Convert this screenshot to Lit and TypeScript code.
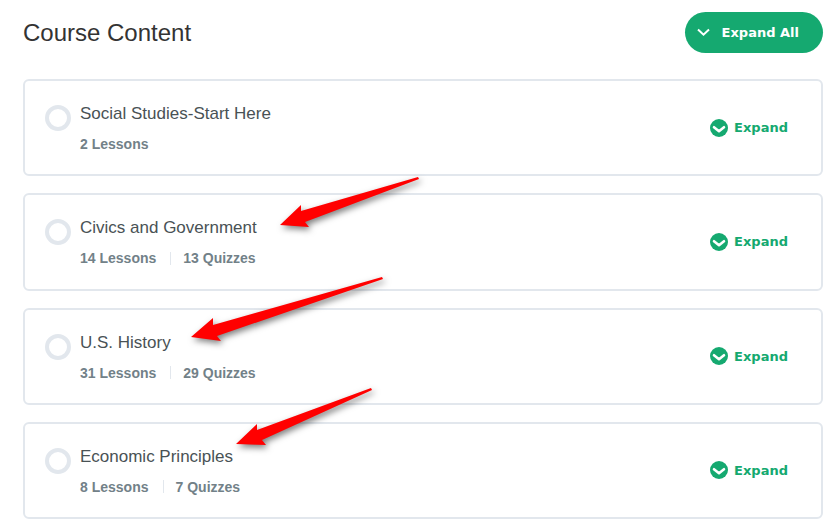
import { LitElement, html, css, svg, nothing } from "lit";
import { customElement } from "lit/decorators.js";

interface Section {
  title: string;
  lessons: number;
  quizzes: number;
}

const SECTIONS: Section[] = [
  { title: "Social Studies-Start Here", lessons: 2, quizzes: 0 },
  { title: "Civics and Government", lessons: 14, quizzes: 13 },
  { title: "U.S. History", lessons: 31, quizzes: 29 },
  { title: "Economic Principles", lessons: 8, quizzes: 7 },
];

// Annotation arrows: tail, upper notch and barb, tip, lower barb and notch.
const ARROWS = [
  "418,177 301,211 301,205 280,225 309,227 305,222 419,179",
  "382,277 213,325 213,318 191,337 221,341 217,336 383,279",
  "371,388 257,430 257,424 236,444 266,445 262,440 372,390",
];

@customElement("app-root")
export class AppRoot extends LitElement {
  static styles = css`
    :host {
      display: block;
      position: relative;
      background: #fff;
      font-family: "Liberation Sans", Arial, sans-serif;
    }
    .page {
      box-sizing: border-box;
      min-height: 100vh;
      display: flex;
      flex-direction: column;
      gap: 26px;
      padding: 12px 17px 12px 23px;
    }
    .head {
      display: flex;
      align-items: center;
      justify-content: space-between;
    }
    h1 {
      margin: 0;
      font-size: 24px;
      line-height: 32px;
      font-weight: 400;
      color: #333;
    }
    button {
      border: 0;
      margin: 0;
      display: flex;
      align-items: center;
      font-family: "DejaVu Sans", sans-serif;
      font-size: 13px;
      line-height: 17px;
      font-weight: 700;
      cursor: pointer;
    }
    .all {
      gap: 12px;
      padding: 12px 24px 12px 12px;
      border-radius: 21px;
      background: #15a970;
      color: #fff;
    }
    .list {
      flex: 1;
      display: grid;
      grid-auto-rows: 1fr;
      gap: 17px;
      margin: 0;
      padding: 0;
      list-style: none;
    }
    .card {
      box-sizing: border-box;
      display: flex;
      align-items: center;
      padding: 20px 33px 20px 20px;
      border: 2px solid #e2e7ed;
      border-radius: 6px;
    }
    .info {
      flex: 1;
      display: flex;
      align-items: flex-start;
      gap: 9px;
    }
    .status {
      box-sizing: border-box;
      width: 26px;
      height: 26px;
      margin-top: 3px;
      border: 4px solid #e2e7ed;
      border-radius: 50%;
    }
    h2 {
      margin: 0;
      font-size: 17px;
      line-height: 24px;
      font-weight: 400;
      color: #495255;
    }
    .meta {
      display: flex;
      align-items: center;
      gap: 14px;
      margin-top: 9px;
      font-size: 14px;
      line-height: 18px;
      font-weight: 700;
      color: #728188;
    }
    .quizzes {
      display: flex;
      align-items: center;
      gap: 12px;
    }
    .quizzes::before {
      content: "";
      width: 1px;
      height: 13px;
      background: #e2e7ed;
    }
    .expand {
      gap: 6px;
      padding: 0;
      background: none;
      color: #15a970;
    }
    .arrows {
      position: absolute;
      top: 0;
      left: 0;
      pointer-events: none;
      overflow: visible;
      filter: drop-shadow(2px 3px 3px rgba(0, 0, 0, 0.5));
    }
  `;

  render() {
    return html`
      <main class="page">
        <header class="head">
          <h1>Course Content</h1>
          <button class="all">
            <svg width="13" height="12" viewBox="0 0 13 12" aria-hidden="true">
              <path d="M1 2.5 6.5 7.7 12 2.5" fill="none" stroke="#fff" stroke-width="2" />
            </svg>
            Expand All
          </button>
        </header>
        <ul class="list">
          ${SECTIONS.map((s) => this.card(s))}
        </ul>
      </main>
      <svg class="arrows" width="440" height="470" viewBox="0 0 440 470" aria-hidden="true">
        ${ARROWS.map((points) => svg`<polygon points=${points} fill="#f00" />`)}
      </svg>
    `;
  }

  private card(s: Section) {
    return html`
      <li class="card">
        <div class="info">
          <span class="status"></span>
          <div>
            <h2>${s.title}</h2>
            <div class="meta">
              <span>${s.lessons} Lessons</span>
              ${s.quizzes ? html`<span class="quizzes">${s.quizzes} Quizzes</span>` : nothing}
            </div>
          </div>
        </div>
        <button class="expand">
          <svg width="18" height="18" viewBox="0 0 18 18" aria-hidden="true">
            <circle cx="9" cy="9" r="9" fill="#15a970" />
            <path d="M4 8.2 9 12.2 14 8.2" fill="none" stroke="#fff" stroke-width="2.6" stroke-linecap="round" stroke-linejoin="round" />
          </svg>
          Expand
        </button>
      </li>
    `;
  }
}
